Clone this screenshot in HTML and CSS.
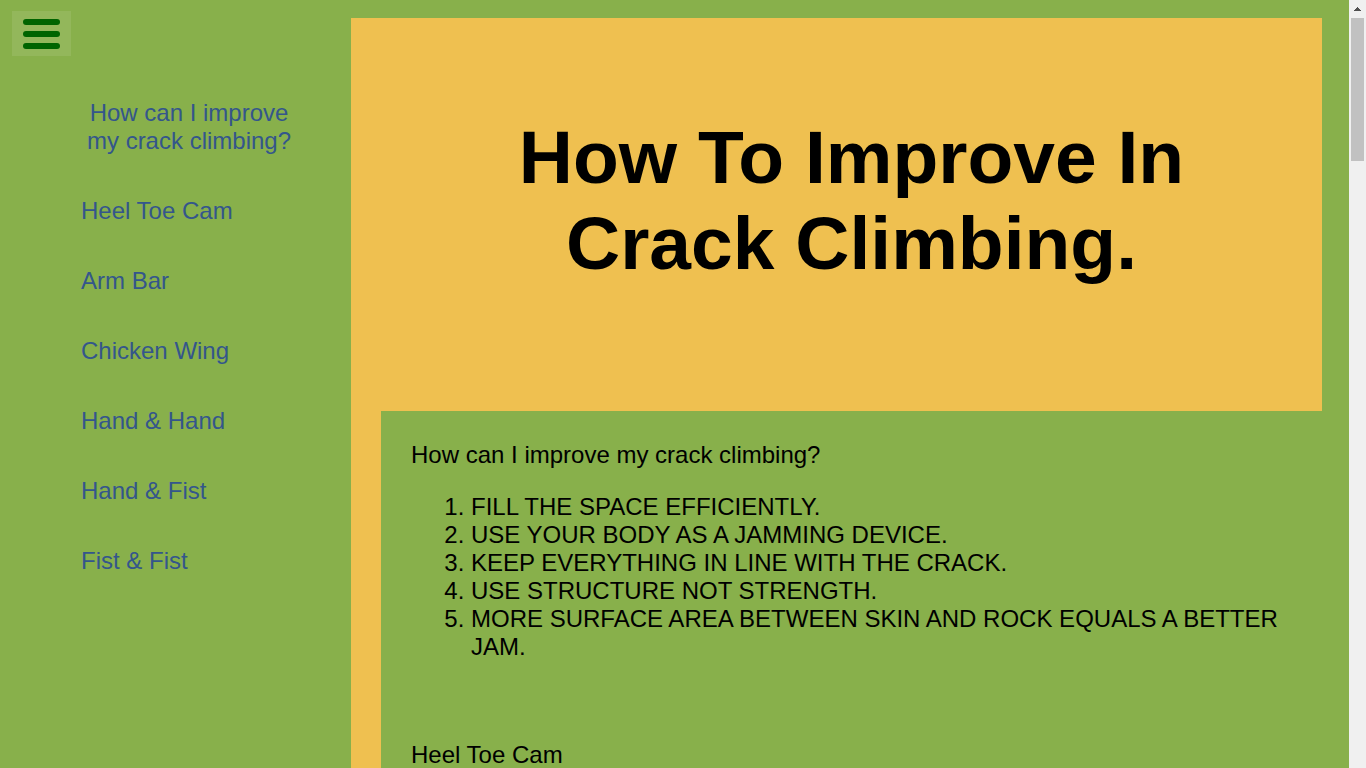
FILE: index.html
```html
<!DOCTYPE html>
<html lang="en">
<head>
<meta charset="utf-8">
<title>How To Improve In Crack Climbing</title>
<meta name="viewport" content="width=device-width, initial-scale=1">
<link rel="stylesheet" href="styles.css">
</head>
<body>
<div class="page">
  <div class="sidebar">
    <button class="menu-button" type="button" aria-label="Toggle menu">
      <span class="menu-line"></span>
      <span class="menu-line"></span>
      <span class="menu-line"></span>
    </button>
    <nav class="menu" aria-label="Techniques">
      <button class="menu-item" type="button">How can I improve my crack climbing?</button>
      <button class="menu-item" type="button">Heel Toe Cam</button>
      <button class="menu-item" type="button">Arm Bar</button>
      <button class="menu-item" type="button">Chicken Wing</button>
      <button class="menu-item" type="button">Hand &amp; Hand</button>
      <button class="menu-item" type="button">Hand &amp; Fist</button>
      <button class="menu-item" type="button">Fist &amp; Fist</button>
    </nav>
  </div>
  <main class="content">
    <header class="banner">
      <h1 class="title">How To Improve In Crack Climbing.</h1>
    </header>
    <div class="sections">
      <section class="section">
        <p class="heading">How can I improve my crack climbing?</p>
        <ol class="tips">
          <li>FILL THE SPACE EFFICIENTLY.</li>
          <li>USE YOUR BODY AS A JAMMING DEVICE.</li>
          <li>KEEP EVERYTHING IN LINE WITH THE CRACK.</li>
          <li>USE STRUCTURE NOT STRENGTH.</li>
          <li>MORE SURFACE AREA BETWEEN SKIN AND ROCK EQUALS A BETTER JAM.</li>
        </ol>
      </section>
      <section class="section">
        <p class="heading">Heel Toe Cam</p>
      </section>
    </div>
  </main>
  <div class="scrollbar" aria-hidden="true">
    <svg class="arrow" viewBox="0 0 17 18" shape-rendering="crispEdges"><path fill="#505050" d="M8 7h1v1h1v1h1v1h1v1H5v-1h1V9h1V8h1z"/></svg>
    <div class="track"><div class="thumb"></div></div>
    <svg class="arrow" viewBox="0 0 17 18" shape-rendering="crispEdges"><path fill="#505050" d="M5 8h7v1h-1v1h-1v1H9v1H8v-1H7v-1H6V9H5z"/></svg>
  </div>
</div>
</body>
</html>
```
FILE: styles.css
```css
* {
  box-sizing: border-box;
}

body {
  margin: 0;
  background: #88b04b;
  color: #000;
  font: 24px/28px "Liberation Sans", Arial, sans-serif;
}

.page {
  display: grid;
  grid-template-columns: 351px 1fr 17px;
  height: 100vh;
  overflow: hidden;
}

.sidebar {
  padding: 11px 12px;
}

.menu-button {
  display: flex;
  flex-direction: column;
  gap: 6px;
  width: 59px;
  padding: 8px 11px 7px;
  border: 0;
  background: #93b75b;
  cursor: pointer;
}

.menu-line {
  width: 37px;
  height: 6px;
  border-radius: 3px;
  background: #006400;
}

.menu {
  display: flex;
  flex-direction: column;
  align-items: flex-start;
  gap: 42px;
  padding: 43px 42px 0 69px;
}

.menu-item {
  padding: 0;
  border: 0;
  background: none;
  color: #34568b;
  font: inherit;
  text-align: center;
  cursor: pointer;
}

.content {
  display: flex;
  flex-direction: column;
  padding-top: 18px;
  min-width: 0;
}

.banner {
  margin-right: 27px;
  padding: 96px 60px 125px 90px;
  background: #efc050;
}

.title {
  margin: 0;
  font-size: 75px;
  line-height: 86px;
  text-align: center;
}

.sections {
  flex: 1;
  border-left: 30px solid #efc050;
  padding: 30px;
}

.section {
  margin-bottom: 80px;
}

.heading {
  margin: 0 0 24px;
}

.tips {
  margin: 0;
  padding-left: 60px;
}

.scrollbar {
  display: flex;
  flex-direction: column;
  background: #f0f0f0;
}

.arrow {
  height: 18px;
  flex: none;
}

.track {
  flex: 1;
  padding: 0 2px;
}

.thumb {
  height: 143px;
  background: #c1c1c1;
}
```
